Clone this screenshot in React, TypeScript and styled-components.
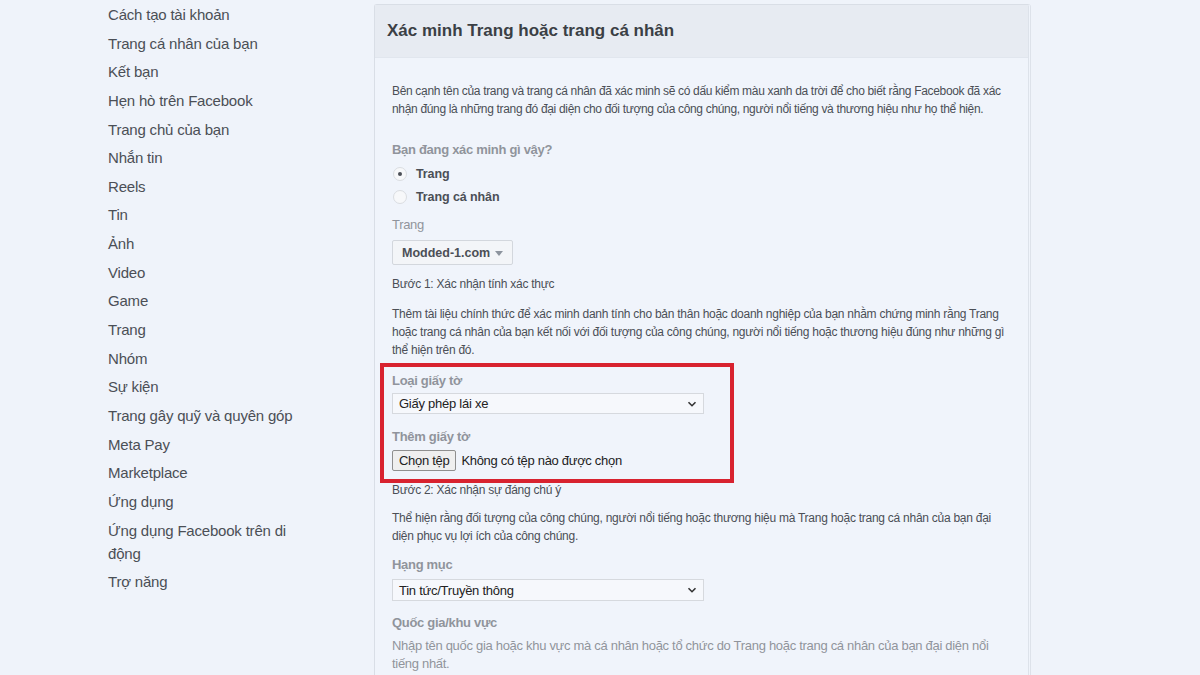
import React from "react";
import styled, { createGlobalStyle } from "styled-components";

const Global = createGlobalStyle`
  html, body { margin: 0; padding: 0; background: #eff3fa; }
  body { font-family: "Liberation Sans", Arial, Helvetica, sans-serif; overflow: hidden; }
  * { box-sizing: border-box; }
`;

const Page = styled.div`
  display: flex;
  align-items: flex-start;
  width: 1200px;
  height: 675px;
  padding-left: 108px;
  padding-top: 3px;
  gap: 66px;
  overflow: hidden;
`;

const Nav = styled.nav`
  width: 200px;
  display: flex;
  flex-direction: column;
  gap: 5.65px;
`;

const NavItem = styled.a`
  display: block;
  font-size: 15px;
  line-height: 23px;
  letter-spacing: -0.2px;
  color: #4b4f56;
  text-decoration: none;
`;

const Panel = styled.section`
  width: 657px;
  margin-top: 1px;
  border: 1px solid #d9dee6;
  border-right: 3px double #dde2ea;
  border-radius: 3px;
  background: #f0f4fb;
`;

const PanelHeader = styled.header`
  height: 53px;
  display: flex;
  align-items: center;
  padding-left: 12px;
  background: #e7ebf2;
  border-bottom: 1px solid #e1e6ee;
`;

const Title = styled.h2`
  margin: 0;
  font-size: 17px;
  font-weight: bold;
  color: #3b3f45;
`;

const PanelBody = styled.div`
  padding: 24px 18px 20px 17px;
`;

const Para = styled.p<{ $mt?: number; $muted?: boolean; $lh?: number; $ls?: number; $fs?: number }>`
  margin: ${(p) => p.$mt ?? 0}px 0 0;
  font-size: ${(p) => p.$fs ?? 12}px;
  line-height: ${(p) => p.$lh ?? 18}px;
  letter-spacing: ${(p) => p.$ls ?? -0.26}px;
  color: ${(p) => (p.$muted ? "#90949c" : "#4b4f56")};
`;

const FieldLabel = styled.div<{ $mt?: number; $bold?: boolean }>`
  margin-top: ${(p) => p.$mt ?? 0}px;
  font-size: 13px;
  line-height: 18px;
  letter-spacing: -0.3px;
  font-weight: ${(p) => (p.$bold ? "bold" : "normal")};
  color: #90949c;
`;

const RadioGroup = styled.div`
  margin-top: 3px;
  display: flex;
  flex-direction: column;
`;

const RadioRow = styled.label`
  height: 23px;
  display: flex;
  align-items: center;
  gap: 9px;
  padding-left: 1px;
  font-size: 12.5px;
  font-weight: bold;
  letter-spacing: -0.1px;
  color: #4b4f56;
`;

const RadioCircle = styled.span<{ $checked?: boolean }>`
  width: 14px;
  height: 14px;
  border-radius: 50%;
  border: 1px solid #dadde1;
  background: #f7f8fa;
  display: flex;
  align-items: center;
  justify-content: center;
  &::after {
    content: "";
    width: 4px;
    height: 4px;
    border-radius: 50%;
    background: ${(p) => (p.$checked ? "#4b4f56" : "transparent")};
  }
`;

const DropButton = styled.div`
  margin-top: 6px;
  width: 121px;
  height: 25px;
  display: flex;
  align-items: center;
  gap: 5px;
  padding-left: 9px;
  background: #f3f5f8;
  border: 1px solid #d3d7dd;
  border-radius: 2px;
  font-size: 12.5px;
  font-weight: bold;
  color: #4b4f56;
`;

const Caret = styled.span`
  width: 0;
  height: 0;
  border-left: 4px solid transparent;
  border-right: 4px solid transparent;
  border-top: 5px solid #8d949e;
  margin-top: 1px;
`;

const Highlight = styled.div`
  margin: 4px 0 0 -12px;
  width: 354px;
  border: 4px solid #d8222f;
  padding: 5px 8px 8px 8px;
  position: relative;
  z-index: 1;
`;

const SelectBox = styled.div<{ $mt?: number; $h?: number }>`
  margin-top: ${(p) => p.$mt ?? 3}px;
  width: 312px;
  height: ${(p) => p.$h ?? 21}px;
  display: flex;
  align-items: center;
  justify-content: space-between;
  padding: 0 6px 0 6px;
  border: 1px solid #d6d9de;
  background: #f6f8fc;
  font-size: 13px;
  letter-spacing: -0.25px;
  color: #222;
`;

const FileRow = styled.div`
  margin-top: 4px;
  height: 21px;
  display: flex;
  align-items: center;
  gap: 5px;
  font-size: 13px;
  letter-spacing: -0.3px;
  color: #222;
`;

const FileButton = styled.button`
  height: 21px;
  padding: 0 6px;
  font-family: inherit;
  font-size: 13px;
  letter-spacing: -0.3px;
  color: #222;
  background: #efefef;
  border: 1px solid #8f8f8f;
  border-radius: 2px;
`;

const Chevron = () => (
  <svg width="10" height="10" viewBox="0 0 10 10">
    <path d="M1.5 3.2 L5 6.7 L8.5 3.2" fill="none" stroke="#333" strokeWidth="1.6" />
  </svg>
);

const navItems = [
  "Cách tạo tài khoản",
  "Trang cá nhân của bạn",
  "Kết bạn",
  "Hẹn hò trên Facebook",
  "Trang chủ của bạn",
  "Nhắn tin",
  "Reels",
  "Tin",
  "Ảnh",
  "Video",
  "Game",
  "Trang",
  "Nhóm",
  "Sự kiện",
  "Trang gây quỹ và quyên góp",
  "Meta Pay",
  "Marketplace",
  "Ứng dụng",
  "Ứng dụng Facebook trên di động",
  "Trợ năng",
];

export default function App() {
  return (
    <>
      <Global />
      <Page>
        <Nav>
          {navItems.map((t) => (
            <NavItem key={t}>{t}</NavItem>
          ))}
        </Nav>
        <Panel>
          <PanelHeader>
            <Title>Xác minh Trang hoặc trang cá nhân</Title>
          </PanelHeader>
          <PanelBody>
            <Para $ls={-0.33}>
              Bên cạnh tên của trang và trang cá nhân đã xác minh sẽ có dấu kiểm màu xanh da trời để cho biết rằng Facebook đã xác
              nhận đúng là những trang đó đại diện cho đối tượng của công chúng, người nổi tiếng và thương hiệu như họ thể hiện.
            </Para>
            <FieldLabel $mt={23} $bold>
              Bạn đang xác minh gì vậy?
            </FieldLabel>
            <RadioGroup>
              <RadioRow>
                <RadioCircle $checked />
                Trang
              </RadioRow>
              <RadioRow>
                <RadioCircle />
                Trang cá nhân
              </RadioRow>
            </RadioGroup>
            <FieldLabel $mt={8}>Trang</FieldLabel>
            <DropButton>
              Modded-1.com <Caret />
            </DropButton>
            <Para $mt={10}>Bước 1: Xác nhận tính xác thực</Para>
            <Para $mt={12}>
              Thêm tài liệu chính thức để xác minh danh tính cho bản thân hoặc doanh nghiệp của bạn nhằm chứng minh rằng Trang
              hoặc trang cá nhân của bạn kết nối với đối tượng của công chúng, người nổi tiếng hoặc thương hiệu đúng như những gì
              thể hiện trên đó.
            </Para>
            <Highlight>
              <FieldLabel $bold>Loại giấy tờ</FieldLabel>
              <SelectBox>
                Giấy phép lái xe
                <Chevron />
              </SelectBox>
              <FieldLabel $mt={14} $bold>
                Thêm giấy tờ
              </FieldLabel>
              <FileRow>
                <FileButton>Chọn tệp</FileButton>
                Không có tệp nào được chọn
              </FileRow>
            </Highlight>
            <Para $lh={14}>Bước 2: Xác nhận sự đáng chú ý</Para>
            <Para $mt={13} $lh={17.5}>
              Thể hiện rằng đối tượng của công chúng, người nổi tiếng hoặc thương hiệu mà Trang hoặc trang cá nhân của bạn đại
              diện phục vụ lợi ích của công chúng.
            </Para>
            <FieldLabel $mt={11} $bold>
              Hạng mục
            </FieldLabel>
            <SelectBox $mt={5} $h={22}>
              Tin tức/Truyền thông
              <Chevron />
            </SelectBox>
            <FieldLabel $mt={13} $bold>
              Quốc gia/khu vực
            </FieldLabel>
            <Para $mt={5} $muted $fs={13} $ls={-0.3}>
              Nhập tên quốc gia hoặc khu vực mà cá nhân hoặc tổ chức do Trang hoặc trang cá nhân của bạn đại diện nổi
              tiếng nhất.
            </Para>
          </PanelBody>
        </Panel>
      </Page>
    </>
  );
}
